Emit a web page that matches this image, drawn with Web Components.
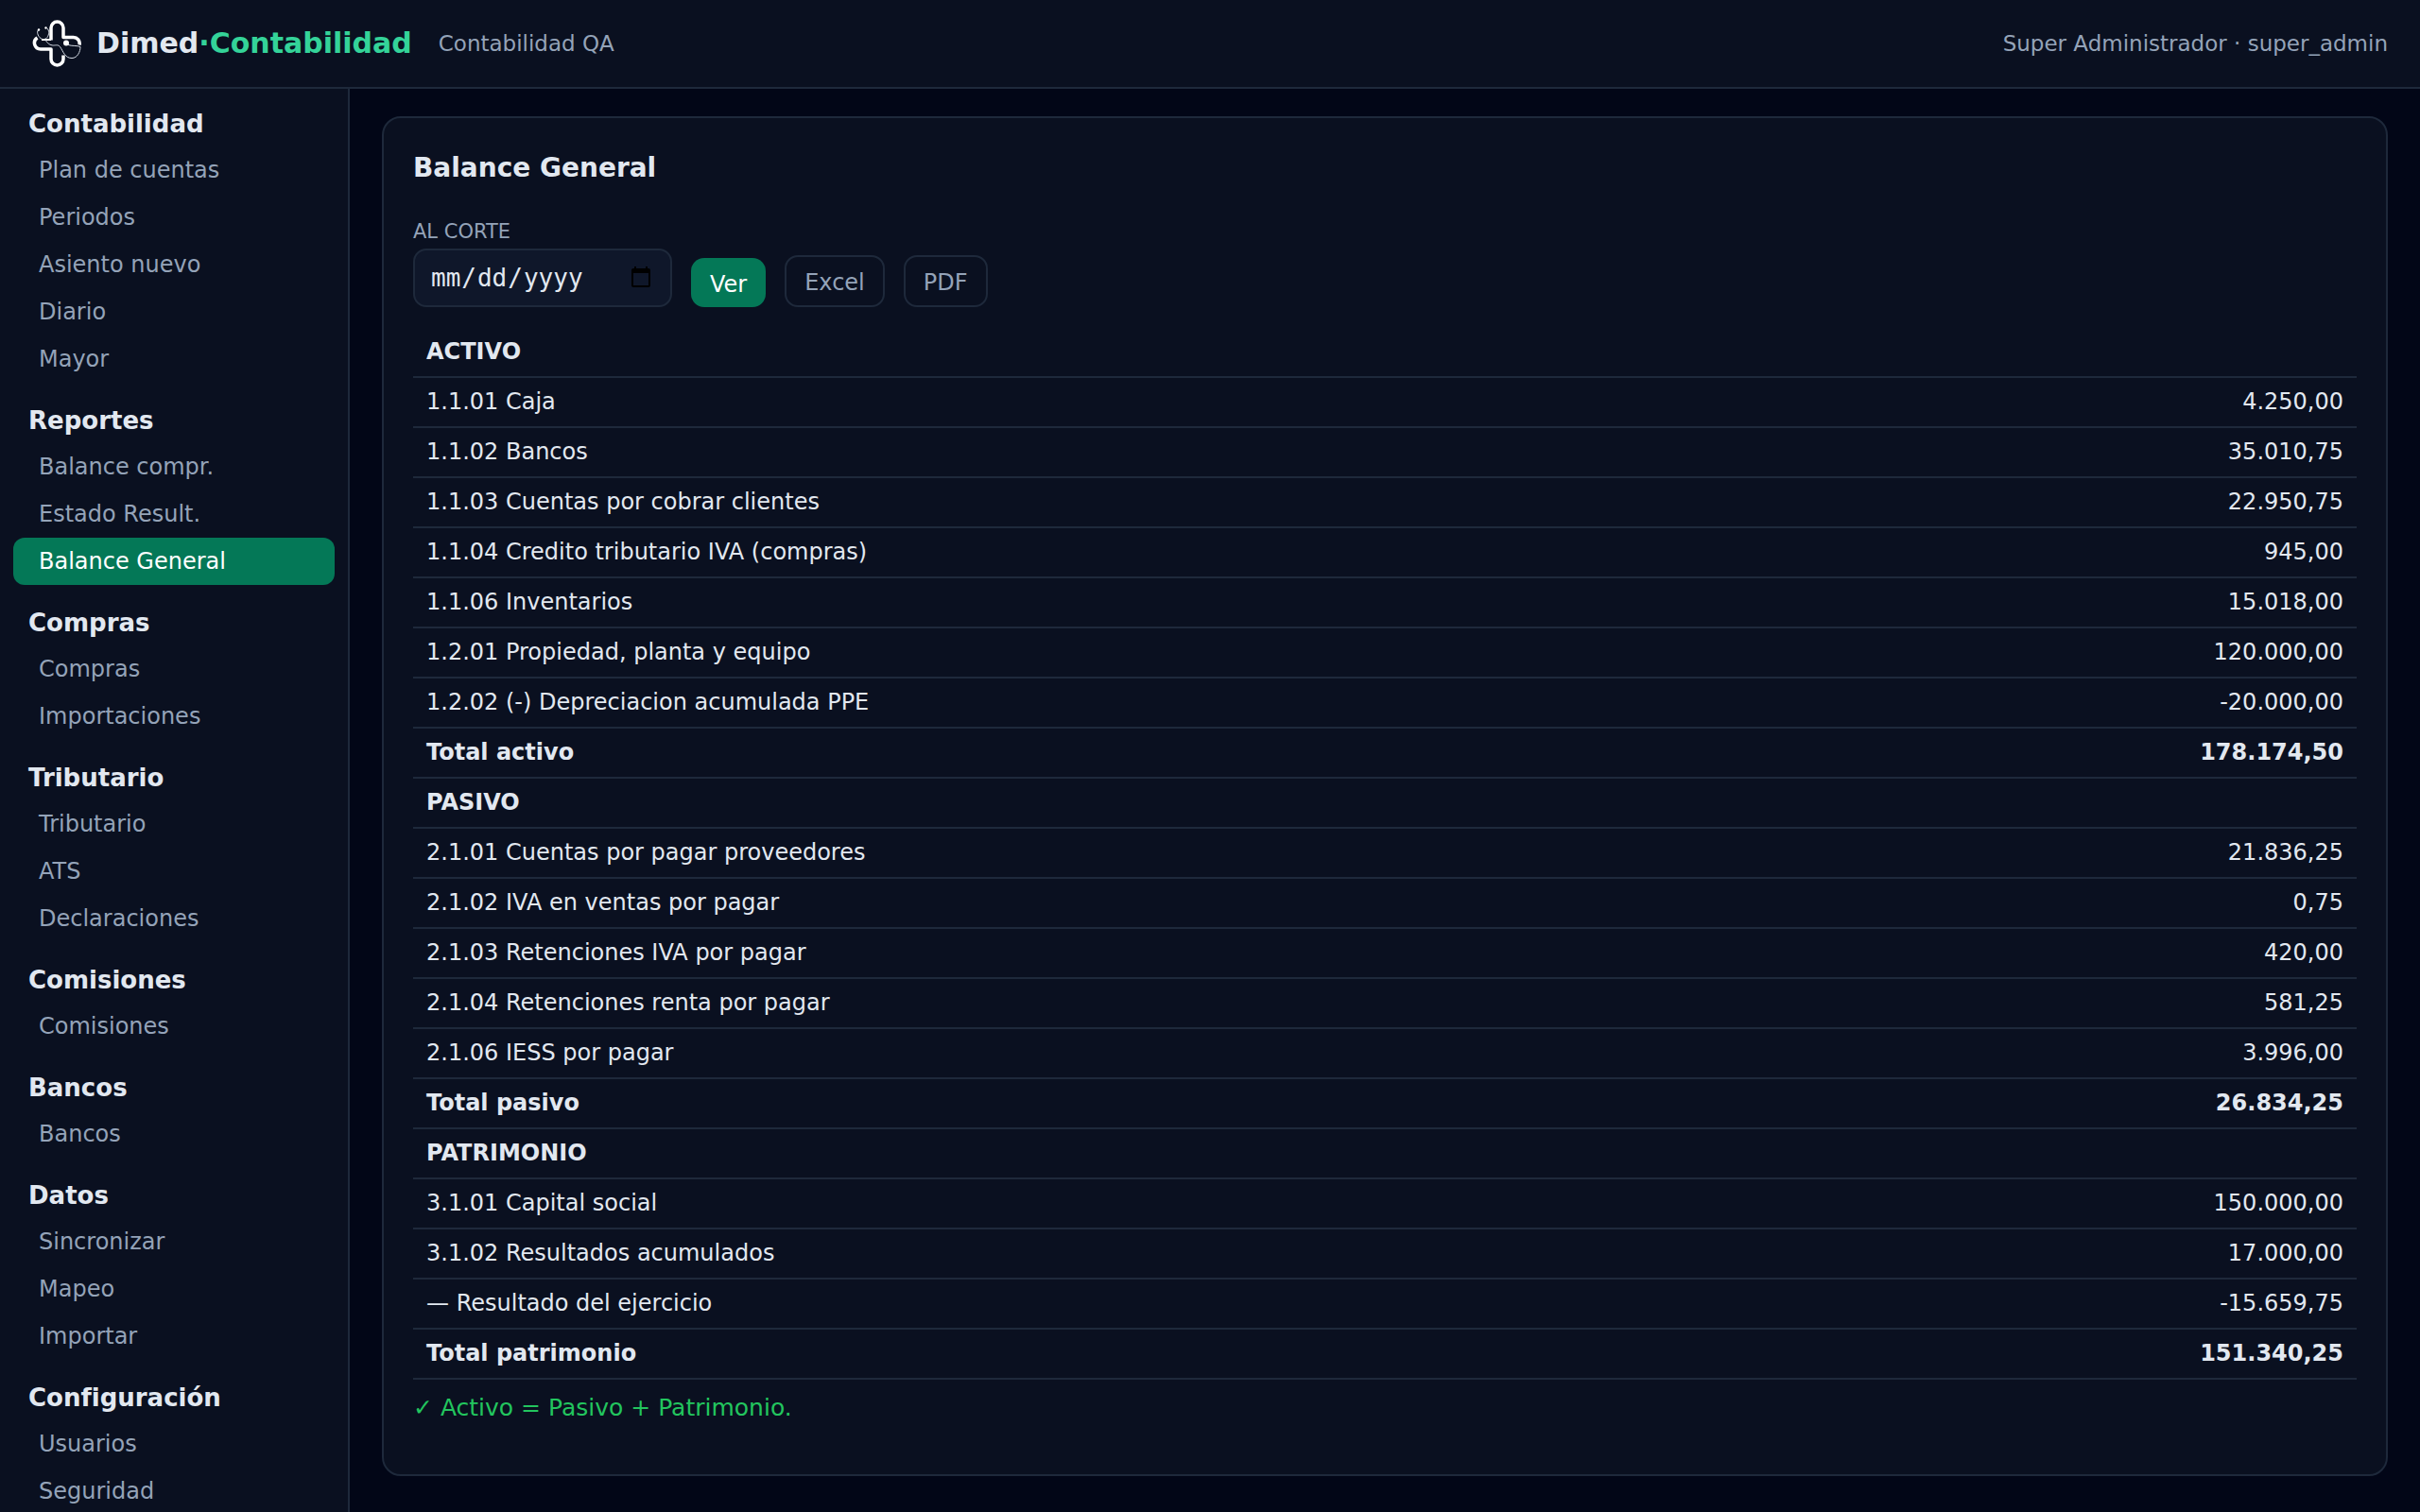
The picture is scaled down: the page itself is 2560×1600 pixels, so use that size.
<!DOCTYPE html>
<html lang="es">
<head>
<meta charset="utf-8">
<title>Dimed·Contabilidad — Balance General</title>
<style>
  :root {
    --bg: #020617;
    --panel: #0a1020;
    --field: #0f172a;
    --line: #1e293b;
    --text: #e2e8f0;
    --muted: #94a3b8;
    --accent: #047857;
    --brand: #34d399;
    --ok: #22c55e;
  }
  html, body { height: 100%; }
  body {
    margin: 0;
    overflow: hidden;
    background: var(--bg);
    color: var(--text);
    font: 24px/36px "DejaVu Sans", sans-serif;
  }
</style>
</head>
<body>
<app-shell>
  <app-header slot="header" company="Contabilidad QA" user="Super Administrador · super_admin"></app-header>
  <nav-group slot="nav" heading="Contabilidad" items="Plan de cuentas|Periodos|Asiento nuevo|Diario|Mayor"></nav-group>
  <nav-group slot="nav" heading="Reportes" items="Balance compr.|Estado Result.|Balance General" current="Balance General"></nav-group>
  <nav-group slot="nav" heading="Compras" items="Compras|Importaciones"></nav-group>
  <nav-group slot="nav" heading="Tributario" items="Tributario|ATS|Declaraciones"></nav-group>
  <nav-group slot="nav" heading="Comisiones" items="Comisiones"></nav-group>
  <nav-group slot="nav" heading="Bancos" items="Bancos"></nav-group>
  <nav-group slot="nav" heading="Datos" items="Sincronizar|Mapeo|Importar"></nav-group>
  <nav-group slot="nav" heading="Configuración" items="Usuarios|Seguridad"></nav-group>
  <panel-card heading="Balance General">
    <report-filter></report-filter>
    <balance-table></balance-table>
    <status-note>✓ Activo = Pasivo + Patrimonio.</status-note>
  </panel-card>
</app-shell>

<script>
const define = (name, render) => customElements.define(name, class extends HTMLElement {
  constructor() {
    super();
    this.attachShadow({ mode: "open" });
  }
  connectedCallback() {
    this.shadowRoot.innerHTML = render(this);
  }
});

define("app-shell", () => `
  <style>
    :host { display: flex; flex-direction: column; height: 100%; }
    .body { display: flex; flex: 1; min-height: 0; }
    aside {
      box-sizing: border-box; flex: none; width: 370px; overflow: hidden;
      padding: 13px 14px; background: var(--panel); border-right: 2px solid var(--line);
    }
    main { flex: 1; min-width: 0; padding: 29px 34px; }
  </style>
  <slot name="header"></slot>
  <div class="body">
    <aside><slot name="nav"></slot></aside>
    <main><slot></slot></main>
  </div>`);

define("brand-logo", () => `
  <style>
    :host { display: block; width: 52px; height: 52px; }
    svg { display: block; width: 100%; height: 100%; }
  </style>
  <svg viewBox="0 0 52 52" fill="none" stroke-linecap="butt" stroke-linejoin="round" aria-hidden="true">
    <g stroke="#fff" stroke-width="3.500">
      <path d="M20 22.500V9.500a6.500 6.500 0 0 1 13 0V19.500h10.500a6.500 6.500 0 0 1 6.500 8"/>
      <path d="M5.500 20a6.500 6.500 0 0 0 3.500 12h11v10.500a6.500 6.500 0 0 0 13 0v-4"/>
      <path d="M10 22h10" stroke-width="2"/>
    </g>
    <g stroke="#d5dbe5" stroke-width="1" stroke-linecap="round">
      <path d="M7 11.500c-3 1-1 7 2 9 2 1.500 5 1.500 7-1 2-3 2.500-7 0-9.500"/>
      <path d="M14 22c2 4 5 6 8.500 6 3 0 5-1 7 1.500 3.500 5 5 12 12.500 12 6 0 9-7 9-12-3-1.500-9-.5-13-2"/>
    </g>
    <g fill="#fff">
      <circle cx="7" cy="11.500" r="1.200"/><circle cx="14.500" cy="9.500" r="1.200"/>
      <circle cx="36" cy="25.500" r="3"/>
    </g>
  </svg>`);

define("app-header", el => `
  <style>
    :host {
      display: flex; align-items: center; box-sizing: border-box; height: 94px; padding: 0 34px;
      background: var(--panel); border-bottom: 2px solid var(--line); color: var(--muted); font-size: 23px;
    }
    h1 { margin: 0 28px 0 16px; font-size: 30px; line-height: 36px; color: var(--text); }
    h1 span { color: var(--brand); }
    .user { margin-left: auto; }
  </style>
  <brand-logo></brand-logo>
  <h1>Dimed<span>·Contabilidad</span></h1>
  <span>${el.getAttribute("company")}</span>
  <span class="user">${el.getAttribute("user")}</span>`);

define("nav-group", el => `
  <style>
    :host { display: block; margin-bottom: 16px; }
    h2 { margin: 0; padding: 6px 16px; font-size: 26px; line-height: 36px; color: var(--text); }
    ul { margin: 0; padding: 0; list-style: none; }
    a { display: block; padding: 7px 27px; border-radius: 12px; color: var(--muted); text-decoration: none; }
    a[aria-current] { background: var(--accent); color: #fff; }
  </style>
  <h2>${el.getAttribute("heading")}</h2>
  <ul>${el.getAttribute("items").split("|").map(t =>
    `<li><a href="#"${t === el.getAttribute("current") ? ' aria-current="page"' : ""}>${t}</a></li>`).join("")}</ul>`);

define("panel-card", el => `
  <style>
    :host {
      display: block; padding: 32px 31px; background: var(--panel);
      border: 2px solid var(--line); border-radius: 20px;
    }
    h2 { margin: 0 0 31px; font-size: 28px; line-height: 42px; }
  </style>
  <h2>${el.getAttribute("heading")}</h2>
  <slot></slot>`);

define("report-filter", () => `
  <style>
    :host { display: block; margin-bottom: 22px; }
    form { display: flex; align-items: flex-end; gap: 20px; }
    .field { display: flex; flex-direction: column; gap: 3px; }
    label { font-size: 21px; line-height: 30px; color: var(--muted); }
    input {
      box-sizing: border-box; width: 274px; height: 62px; padding: 0 16px;
      font: 26px/36px "DejaVu Sans Mono", monospace;
      color: var(--text); background: var(--field);
      border: 2px solid var(--line); border-radius: 14px;
    }
    button {
      font: 24px/36px "DejaVu Sans", sans-serif; color: var(--muted); background: none;
      border: 2px solid var(--line); border-radius: 14px; padding: 9px 19px 6px;
    }
    .primary { border: 0; padding: 10px 20px 6px; background: var(--accent); color: #fff; }
  </style>
  <form>
    <div class="field">
      <label for="cut">AL CORTE</label>
      <input id="cut" type="date">
    </div>
    <button type="button" class="primary">Ver</button>
    <button type="button">Excel</button>
    <button type="button">PDF</button>
  </form>`);

const sections = [
  ["ACTIVO", [
    ["1.1.01 Caja", "4.250,00"],
    ["1.1.02 Bancos", "35.010,75"],
    ["1.1.03 Cuentas por cobrar clientes", "22.950,75"],
    ["1.1.04 Credito tributario IVA (compras)", "945,00"],
    ["1.1.06 Inventarios", "15.018,00"],
    ["1.2.01 Propiedad, planta y equipo", "120.000,00"],
    ["1.2.02 (-) Depreciacion acumulada PPE", "-20.000,00"],
  ], ["Total activo", "178.174,50"]],
  ["PASIVO", [
    ["2.1.01 Cuentas por pagar proveedores", "21.836,25"],
    ["2.1.02 IVA en ventas por pagar", "0,75"],
    ["2.1.03 Retenciones IVA por pagar", "420,00"],
    ["2.1.04 Retenciones renta por pagar", "581,25"],
    ["2.1.06 IESS por pagar", "3.996,00"],
  ], ["Total pasivo", "26.834,25"]],
  ["PATRIMONIO", [
    ["3.1.01 Capital social", "150.000,00"],
    ["3.1.02 Resultados acumulados", "17.000,00"],
    ["— Resultado del ejercicio", "-15.659,75"],
  ], ["Total patrimonio", "151.340,25"]],
];

define("balance-table", () => `
  <style>
    :host { display: block; }
    table { width: 100%; border-collapse: collapse; }
    th, td { padding: 7px 14px 8px; border-bottom: 2px solid var(--line); font-weight: 400; text-align: left; }
    .num { text-align: right; }
    .strong > * { font-weight: 700; }
  </style>
  <table>${sections.map(([title, rows, total]) => `
    <tbody>
      <tr class="strong"><th scope="rowgroup" colspan="2">${title}</th></tr>
      ${rows.map(([name, value]) => `<tr><td>${name}</td><td class="num">${value}</td></tr>`).join("")}
      <tr class="strong"><td>${total[0]}</td><td class="num">${total[1]}</td></tr>
    </tbody>`).join("")}
  </table>`);

define("status-note", () => `
  <style>
    :host { display: block; padding: 11px 0 19px; font-size: 25px; line-height: 38px; color: var(--ok); }
  </style>
  <slot></slot>`);
</script>
</body>
</html>
